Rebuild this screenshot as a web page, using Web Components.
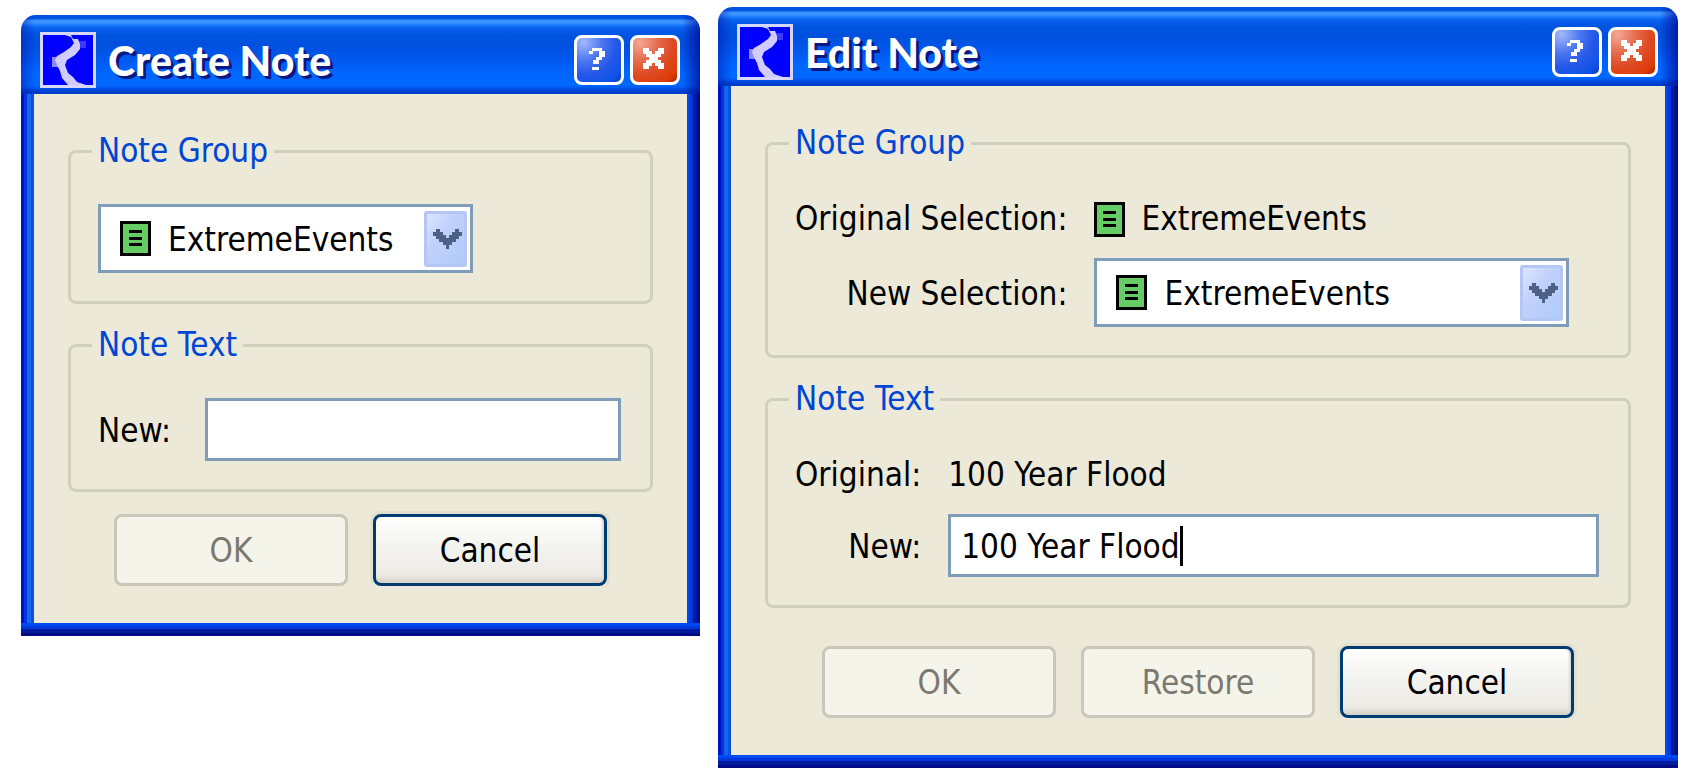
<!DOCTYPE html>
<html lang="en">
<head>
<meta charset="utf-8">
<title>Notes</title>
<style>
body{
    margin:0;
    padding:7px 18px 11px 21px;
    background-color:white;
    color:black;
    font-family:"DejaVu Sans Condensed","Noto Sans",sans-serif;
    font-size:33px;
    line-height:40px;
    display:flex;
    align-items:flex-start;
    gap:18px;
}

.create{
    flex:679 1 0;
    margin-top:8px;
    --actions-gap:22px;
}

.edit{
    flex:960 1 0;
}
</style>
</head>
<body>

<xp-window class="create" caption="Create Note">
    <xp-group label="Note Group">
        <xp-combo name="Note Group" value="ExtremeEvents" style="--combo-width:375px"></xp-combo>
    </xp-group>
    <xp-group label="Note Text">
        <xp-field label="New:" style="--label-gap:34px"></xp-field>
    </xp-group>
    <xp-button slot="actions" name="OK" disabled></xp-button>
    <xp-button slot="actions" name="Cancel"></xp-button>
</xp-window>

<xp-window class="edit" caption="Edit Note">
    <xp-group label="Note Group">
        <xp-value label="Original Selection:"><note-icon></note-icon>ExtremeEvents</xp-value>
        <xp-combo label="New Selection:" value="ExtremeEvents" style="--combo-width:475px"></xp-combo>
    </xp-group>
    <xp-group label="Note Text">
        <xp-value label="Original:">100 Year Flood</xp-value>
        <xp-field label="New:" value="100 Year Flood" caret></xp-field>
    </xp-group>
    <xp-button slot="actions" name="OK" disabled></xp-button>
    <xp-button slot="actions" name="Restore" disabled></xp-button>
    <xp-button slot="actions" name="Cancel"></xp-button>
</xp-window>

<script>
function makeTemplate(html){
    const template=document.createElement("template");
    template.innerHTML=html;
    return template;
}

// a row of a group: the label goes in the first column, the control in the second
const rowStyle=`
:host{
    display:grid;
    grid-column:1 / -1;
    grid-template-columns:subgrid;
    align-items:center;
    min-height:44px;
}
label,.label{
    padding-top:2px;
    text-align:right;
    white-space:nowrap;
}
`;

const windowTemplate=makeTemplate(`
<style>
:host{
    display:block;
    min-width:0;
}
header{
    display:flex;
    align-items:center;
    gap:6px;
    padding:16px 20px 5px 19px;
    border-radius:15px 15px 0 0;
    background:
        linear-gradient(to right,rgba(0,20,170,.45),transparent 14px),
        linear-gradient(to left,rgba(0,10,150,.75),transparent 18px),
        linear-gradient(#0050dc 0,#0458e6 4px,#3a93ff 5px,#3a93ff 8px,#1a7cff 10px,#0a62f0 13px,#0054e0 19px,#0050de 30px,#0058ee 44px,#0066ff 58px,#0068ff 70px,#0058f0 73px,#0046d8 75px,#003ac4 79px);
}
.logo{
    width:56px;
    height:56px;
    flex:none;
}
h1{
    flex:1;
    margin:0 0 0 6px;
    padding-top:2px;
    font-family:Lato,sans-serif;
    font-size:41px;
    font-weight:900;
    line-height:56px;
    color:white;
    text-shadow:3px 3px 0 #0a1883;
    white-space:nowrap;
}
header button{
    width:50px;
    height:50px;
    flex:none;
    padding:0;
    border:3px solid white;
    border-radius:8px;
    background:radial-gradient(circle at 15% 10%,#a4b9fb 0,#4a75f0 35%,#2458e8 60%,#0f52e8 85%,#0a3cc0 100%);
}
header .close{
    background:radial-gradient(circle at 15% 10%,#f3a896 0,#e5694b 35%,#de4a24 60%,#dc3c08 85%,#a82404 100%);
}
header button svg{
    display:block;
    width:44px;
    height:44px;
}
.frame{
    padding:0 13px 13px;
    background:
        linear-gradient(to top,#000c84 3px,#001c9c 3px,#001c9c 7px,#0038dc 7px,#0038dc 10px,#0048f4 10px) bottom/100% 13px no-repeat,
        linear-gradient(to right,#0012c8 3px,#0532da 3px,#0532da 6px,#1468ee 6px,#1468ee 10px,#0852dc 10px) left/13px 100% no-repeat,
        linear-gradient(to left,#000c84 3px,#001c9c 3px,#001c9c 7px,#0038dc 7px,#0038dc 10px,#0048f4 10px) right/13px 100% no-repeat;
}
.content{
    display:flex;
    flex-direction:column;
    gap:21px;
    padding:37px 34px;
    background-color:#ece9d8;
}
.actions{
    display:flex;
    justify-content:center;
    gap:25px;
    margin-top:calc(var(--actions-gap,38px) - 21px);
}
</style>
<header>
    <svg class="logo" viewBox="0 0 56 56" aria-hidden="true">
        <path d="M0 0h56v56H0z" fill="#d6d6ff"/>
        <path d="M3 3h50v50H3z" fill="#0000ff"/>
        <path d="M39 9h7v7h-6z" fill="#3c38ff"/>
        <path d="M12 25h9v10h-9z" fill="#8c88ff"/>
        <path d="M25 3h6l2 4h5l2 5v5l-5 6l-8 5l-2 5l3 8l5 4l4 5l9 3H28l-6-7l-2-7l-3-6l-2-5l2-4l7-4l7-5l3-4l-3-6z" fill="#d0ccff"/>
    </svg>
    <h1></h1>
    <button type="button" aria-label="Help">
        <svg viewBox="0 0 44 44" fill="white"><path d="M15 10h10v3h3v6h-3v3h-3v4h-6v-4h3v-3h3v-6h-6v3h-4v-3h3zM15 29h7v3h-7z"/></svg>
    </button>
    <button type="button" class="close" aria-label="Close">
        <svg viewBox="0 0 44 44" fill="white"><path d="M10 10h6v3h3v3h3v-3h3v-3h6v6h-3v3h-3v3h3v3h3v6h-6v-3h-3v-3h-3v3h-3v3h-6v-6h3v-3h3v-3h-3v-3h-3z"/></svg>
    </button>
</header>
<div class="frame">
    <div class="content">
        <slot></slot>
        <div class="actions"><slot name="actions"></slot></div>
    </div>
</div>
`);

class XpWindow extends HTMLElement{
    constructor(){
        super();
        this.attachShadow({mode:'open'});
        this.shadowRoot.appendChild(windowTemplate.content.cloneNode(true));
        this.shadowRoot.querySelector('h1').innerText=this.getAttribute('caption');
    }
}

const groupTemplate=makeTemplate(`
<style>
:host{
    display:block;
}
fieldset{
    margin:0;
    min-width:0;
    padding:33px 29px 28px 27px;
    border:3px solid #d0d0bf;
    border-radius:8px;
}
legend{
    margin-left:-6px;
    padding:0 6px;
    color:#0046d5;
}
.rows{
    display:grid;
    grid-template-columns:max-content 1fr;
    row-gap:18px;
}
</style>
<fieldset>
    <legend></legend>
    <div class="rows"><slot></slot></div>
</fieldset>
`);

class XpGroup extends HTMLElement{
    constructor(){
        super();
        this.attachShadow({mode:'open'});
        this.shadowRoot.appendChild(groupTemplate.content.cloneNode(true));
        this.shadowRoot.querySelector('legend').innerText=this.getAttribute('label');
    }
}

const iconTemplate=makeTemplate(`
<style>
:host{
    display:block;
    flex:none;
}
svg{
    display:block;
    width:31px;
    height:35px;
}
</style>
<svg viewBox="0 0 31 35" aria-hidden="true">
    <path d="M0 0h31v35H0z"/>
    <path d="M3 3h25v29H3z" fill="#66cc66"/>
    <path d="M9 9h13v3H9zM9 16h13v3H9zM9 22h13v3H9z"/>
</svg>
`);

class NoteIcon extends HTMLElement{
    constructor(){
        super();
        this.attachShadow({mode:'open'});
        this.shadowRoot.appendChild(iconTemplate.content.cloneNode(true));
    }
}

const valueTemplate=makeTemplate(`
<style>
${rowStyle}
.value{
    display:flex;
    align-items:center;
    gap:16px;
    margin-left:27px;
    padding-top:2px;
}
</style>
<span class="label"></span>
<span class="value"><slot></slot></span>
`);

class XpValue extends HTMLElement{
    constructor(){
        super();
        this.attachShadow({mode:'open'});
        this.shadowRoot.appendChild(valueTemplate.content.cloneNode(true));
        this.shadowRoot.querySelector('.label').innerText=this.getAttribute('label');
    }
}

const comboTemplate=makeTemplate(`
<style>
${rowStyle}
.combo{
    display:grid;
    grid-template-columns:19px 31px 1fr 43px 3px;
    align-items:center;
    box-sizing:border-box;
    width:var(--combo-width);
    max-width:100%;
    height:69px;
    border:3px solid #7f9db9;
    background-color:white;
}
label + .combo{
    margin-left:27px;
}
select{
    grid-area:1 / 1 / 2 / -1;
    height:63px;
    margin:0;
    padding:2px 46px 0 67px;
    border:none;
    outline:none;
    appearance:none;
    background:none;
    color:inherit;
    font:inherit;
}
note-icon{
    grid-area:1 / 2;
    pointer-events:none;
}
.arrow{
    grid-area:1 / 4;
    width:43px;
    height:56px;
    pointer-events:none;
}
</style>
<label for="select"></label>
<div class="combo">
    <select id="select"><option></option></select>
    <note-icon></note-icon>
    <svg class="arrow" viewBox="0 0 43 56" aria-hidden="true">
        <defs>
            <linearGradient id="face" x1="0" y1="0" x2="1" y2="1">
                <stop offset="0" stop-color="#dce6ff"/>
                <stop offset=".4" stop-color="#c2d0fb"/>
                <stop offset="1" stop-color="#aeccfa"/>
            </linearGradient>
        </defs>
        <rect width="43" height="56" rx="3" fill="#b4c6f6"/>
        <rect x="3" y="3" width="37" height="50" fill="url(#face)"/>
        <path d="M12 18h4v3h3v3h3v3h3v-3h3v-3h3v-3h4v3h3v4h-3v3h-3v3h-4v3h-3v4h-3v-4h-3v-3h-4v-3h-3v-3h-3v-4h3z" fill="#4d6185"/>
    </svg>
</div>
`);

class XpCombo extends HTMLElement{
    constructor(){
        super();
        this.attachShadow({mode:'open'});
        this.shadowRoot.appendChild(comboTemplate.content.cloneNode(true));
        const label=this.shadowRoot.querySelector('label');
        if(this.hasAttribute('label')){
            label.innerText=this.getAttribute('label');
        }else{
            label.remove();
            this.shadowRoot.querySelector('.combo').style.gridColumn='1 / -1';
            this.shadowRoot.querySelector('select').setAttribute('aria-label',this.getAttribute('name'));
        }
        this.shadowRoot.querySelector('option').innerText=this.getAttribute('value');
    }
}

const fieldTemplate=makeTemplate(`
<style>
${rowStyle}
.box{
    display:flex;
    align-items:center;
    box-sizing:border-box;
    height:63px;
    min-width:0;
    margin-left:var(--label-gap,27px);
    padding:0 10px;
    border:3px solid #7f9db9;
    background-color:white;
}
input{
    flex:1;
    min-width:0;
    box-sizing:border-box;
    height:57px;
    padding:2px 0 0;
    border:none;
    outline:none;
    background:none;
    color:inherit;
    font:inherit;
}
.caret{
    display:none;
    width:3px;
    height:40px;
    background-color:black;
}
:host([caret]) input{
    flex:none;
    field-sizing:content;
    caret-color:transparent;
}
:host([caret]) .caret{
    display:block;
}
</style>
<label for="input"></label>
<div class="box"><input id="input" type="text"><span class="caret"></span></div>
`);

class XpField extends HTMLElement{
    constructor(){
        super();
        this.attachShadow({mode:'open'});
        this.shadowRoot.appendChild(fieldTemplate.content.cloneNode(true));
        this.shadowRoot.querySelector('label').innerText=this.getAttribute('label');
        this.shadowRoot.querySelector('input').value=this.getAttribute('value')||'';
    }

    connectedCallback(){
        this.shadowRoot.querySelector('.box').addEventListener('click',()=>this.shadowRoot.querySelector('input').focus());
    }
}

const buttonTemplate=makeTemplate(`
<style>
:host{
    display:block;
}
button{
    display:block;
    width:234px;
    height:72px;
    padding:2px 0 0;
    border:3px solid #003c74;
    border-radius:8px;
    background:linear-gradient(white,#f4f4f0 40%,#ecebe6 88%,#d6d0c5);
    box-shadow:0 0 0 3px rgba(215,210,190,.35),0 3px 0 0 #f8f7f0,inset -3px 0 2px -1px #dedad0;
    color:black;
    font:inherit;
}
button:disabled{
    border-color:#c9c7ba;
    background:#f5f4ea;
    box-shadow:none;
    color:#7b7870;
}
</style>
<button type="button"></button>
`);

class XpButton extends HTMLElement{
    constructor(){
        super();
        this.attachShadow({mode:'open'});
        this.shadowRoot.appendChild(buttonTemplate.content.cloneNode(true));
        this.shadowRoot.querySelector('button').innerText=this.getAttribute('name');
        this.shadowRoot.querySelector('button').disabled=this.hasAttribute('disabled');
    }
}

window.customElements.define("note-icon",NoteIcon);
window.customElements.define("xp-window",XpWindow);
window.customElements.define("xp-group",XpGroup);
window.customElements.define("xp-value",XpValue);
window.customElements.define("xp-combo",XpCombo);
window.customElements.define("xp-field",XpField);
window.customElements.define("xp-button",XpButton);
</script>
</body>
</html>
